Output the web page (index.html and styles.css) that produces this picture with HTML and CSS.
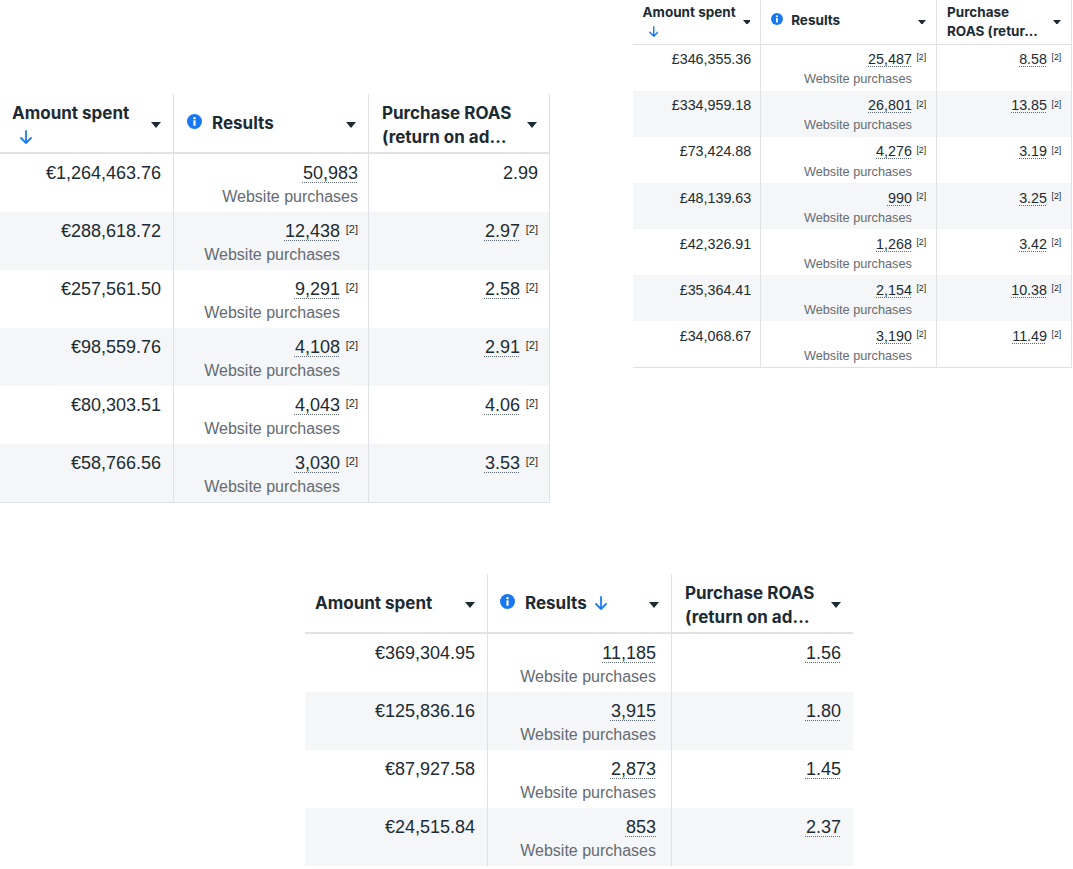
FILE: index.html
```html
<!DOCTYPE html>
<html>
<head>
<meta charset="utf-8">
<link rel="stylesheet" href="styles.css">
</head>
<body>
<div class="canvas">

  <!-- Panel 1 -->
  <div class="panel p1">
    <div class="tbl t1">
      <div class="thead">
        <div class="th c1">
          <div class="label two"><div>Amount spent</div><div class="sortline"><svg class="sort" viewBox="0 0 12 14" width="12" height="14"><path d="M6 1V13M1 8L6 13L11 8" fill="none" stroke="#1a7cf5" stroke-width="1.8" stroke-linecap="round" stroke-linejoin="round"/></svg></div></div>
          <svg class="caret" viewBox="0 0 10 6" width="10" height="6"><path d="M0 0H10L5 6Z" fill="#1c2b33"/></svg>
        </div>
        <div class="th c2">
          <svg class="info" viewBox="0 0 16 16" width="15" height="15"><circle cx="8" cy="8" r="8" fill="#1877f2"/><circle cx="8" cy="4.4" r="1.3" fill="#fff"/><rect x="6.8" y="6.6" width="2.4" height="6" rx="0.6" fill="#fff"/></svg>
          <div class="label">Results</div>
          <svg class="caret" viewBox="0 0 10 6" width="10" height="6"><path d="M0 0H10L5 6Z" fill="#1c2b33"/></svg>
        </div>
        <div class="th c3">
          <div class="label two"><div>Purchase ROAS</div><div>(return on ad…</div></div>
          <svg class="caret" viewBox="0 0 10 6" width="10" height="6"><path d="M0 0H10L5 6Z" fill="#1c2b33"/></svg>
        </div>
      </div>

      <div class="row">
        <div class="td c1"><span class="val">€1,264,463.76</span></div>
        <div class="td c2"><div class="stack"><span class="val u">50,983</span><span class="sub">Website purchases</span></div></div>
        <div class="td c3"><div class="stack"><span class="val">2.99</span></div></div>
      </div>
      <div class="row alt">
        <div class="td c1"><span class="val">€288,618.72</span></div>
        <div class="td c2"><div class="stack"><span class="val u">12,438</span><span class="sub">Website purchases</span></div><span class="ref">[2]</span></div>
        <div class="td c3"><div class="stack"><span class="val u">2.97</span></div><span class="ref">[2]</span></div>
      </div>
      <div class="row">
        <div class="td c1"><span class="val">€257,561.50</span></div>
        <div class="td c2"><div class="stack"><span class="val u">9,291</span><span class="sub">Website purchases</span></div><span class="ref">[2]</span></div>
        <div class="td c3"><div class="stack"><span class="val u">2.58</span></div><span class="ref">[2]</span></div>
      </div>
      <div class="row alt">
        <div class="td c1"><span class="val">€98,559.76</span></div>
        <div class="td c2"><div class="stack"><span class="val u">4,108</span><span class="sub">Website purchases</span></div><span class="ref">[2]</span></div>
        <div class="td c3"><div class="stack"><span class="val u">2.91</span></div><span class="ref">[2]</span></div>
      </div>
      <div class="row">
        <div class="td c1"><span class="val">€80,303.51</span></div>
        <div class="td c2"><div class="stack"><span class="val u">4,043</span><span class="sub">Website purchases</span></div><span class="ref">[2]</span></div>
        <div class="td c3"><div class="stack"><span class="val u">4.06</span></div><span class="ref">[2]</span></div>
      </div>
      <div class="row alt last">
        <div class="td c1"><span class="val">€58,766.56</span></div>
        <div class="td c2"><div class="stack"><span class="val u">3,030</span><span class="sub">Website purchases</span></div><span class="ref">[2]</span></div>
        <div class="td c3"><div class="stack"><span class="val u">3.53</span></div><span class="ref">[2]</span></div>
      </div>
    </div>
  </div>

  <!-- Panel 2 -->
  <div class="panel p2">
    <div class="tbl t2">
      <div class="thead">
        <div class="th c1">
          <div class="label two"><div>Amount spent</div><div class="sortline"><svg class="sort" viewBox="0 0 12 14" width="12" height="14"><path d="M6 1V13M1 8L6 13L11 8" fill="none" stroke="#1a7cf5" stroke-width="1.8" stroke-linecap="round" stroke-linejoin="round"/></svg></div></div>
          <svg class="caret" viewBox="0 0 10 6" width="10" height="6"><path d="M0 0H10L5 6Z" fill="#1c2b33"/></svg>
        </div>
        <div class="th c2">
          <svg class="info" viewBox="0 0 16 16" width="15" height="15"><circle cx="8" cy="8" r="8" fill="#1877f2"/><circle cx="8" cy="4.4" r="1.3" fill="#fff"/><rect x="6.8" y="6.6" width="2.4" height="6" rx="0.6" fill="#fff"/></svg>
          <div class="label">Results</div>
          <svg class="caret" viewBox="0 0 10 6" width="10" height="6"><path d="M0 0H10L5 6Z" fill="#1c2b33"/></svg>
        </div>
        <div class="th c3">
          <div class="label two"><div>Purchase</div><div>ROAS (retur…</div></div>
          <svg class="caret" viewBox="0 0 10 6" width="10" height="6"><path d="M0 0H10L5 6Z" fill="#1c2b33"/></svg>
        </div>
      </div>

      <div class="row">
        <div class="td c1"><span class="val">£346,355.36</span></div>
        <div class="td c2"><div class="stack"><span class="val u">25,487</span><span class="sub">Website purchases</span></div><span class="ref">[2]</span></div>
        <div class="td c3"><div class="stack"><span class="val u">8.58</span></div><span class="ref">[2]</span></div>
      </div>
      <div class="row alt">
        <div class="td c1"><span class="val">£334,959.18</span></div>
        <div class="td c2"><div class="stack"><span class="val u">26,801</span><span class="sub">Website purchases</span></div><span class="ref">[2]</span></div>
        <div class="td c3"><div class="stack"><span class="val u">13.85</span></div><span class="ref">[2]</span></div>
      </div>
      <div class="row">
        <div class="td c1"><span class="val">£73,424.88</span></div>
        <div class="td c2"><div class="stack"><span class="val u">4,276</span><span class="sub">Website purchases</span></div><span class="ref">[2]</span></div>
        <div class="td c3"><div class="stack"><span class="val u">3.19</span></div><span class="ref">[2]</span></div>
      </div>
      <div class="row alt">
        <div class="td c1"><span class="val">£48,139.63</span></div>
        <div class="td c2"><div class="stack"><span class="val u">990</span><span class="sub">Website purchases</span></div><span class="ref">[2]</span></div>
        <div class="td c3"><div class="stack"><span class="val u">3.25</span></div><span class="ref">[2]</span></div>
      </div>
      <div class="row">
        <div class="td c1"><span class="val">£42,326.91</span></div>
        <div class="td c2"><div class="stack"><span class="val u">1,268</span><span class="sub">Website purchases</span></div><span class="ref">[2]</span></div>
        <div class="td c3"><div class="stack"><span class="val u">3.42</span></div><span class="ref">[2]</span></div>
      </div>
      <div class="row alt">
        <div class="td c1"><span class="val">£35,364.41</span></div>
        <div class="td c2"><div class="stack"><span class="val u">2,154</span><span class="sub">Website purchases</span></div><span class="ref">[2]</span></div>
        <div class="td c3"><div class="stack"><span class="val u">10.38</span></div><span class="ref">[2]</span></div>
      </div>
      <div class="row last">
        <div class="td c1"><span class="val">£34,068.67</span></div>
        <div class="td c2"><div class="stack"><span class="val u">3,190</span><span class="sub">Website purchases</span></div><span class="ref">[2]</span></div>
        <div class="td c3"><div class="stack"><span class="val u">11.49</span></div><span class="ref">[2]</span></div>
      </div>
    </div>
  </div>

  <!-- Panel 3 -->
  <div class="panel p3">
    <div class="tbl t3">
      <div class="thead">
        <div class="th c1">
          <div class="label">Amount spent</div>
          <svg class="caret" viewBox="0 0 10 6" width="10" height="6"><path d="M0 0H10L5 6Z" fill="#1c2b33"/></svg>
        </div>
        <div class="th c2">
          <svg class="info" viewBox="0 0 16 16" width="15" height="15"><circle cx="8" cy="8" r="8" fill="#1877f2"/><circle cx="8" cy="4.4" r="1.3" fill="#fff"/><rect x="6.8" y="6.6" width="2.4" height="6" rx="0.6" fill="#fff"/></svg>
          <div class="label inline">Results<svg class="sort inl" viewBox="0 0 12 14" width="12" height="14"><path d="M6 1V13M1 8L6 13L11 8" fill="none" stroke="#1a7cf5" stroke-width="1.8" stroke-linecap="round" stroke-linejoin="round"/></svg></div>
          <svg class="caret" viewBox="0 0 10 6" width="10" height="6"><path d="M0 0H10L5 6Z" fill="#1c2b33"/></svg>
        </div>
        <div class="th c3">
          <div class="label two"><div>Purchase ROAS</div><div>(return on ad…</div></div>
          <svg class="caret" viewBox="0 0 10 6" width="10" height="6"><path d="M0 0H10L5 6Z" fill="#1c2b33"/></svg>
        </div>
      </div>

      <div class="row">
        <div class="td c1"><span class="val">€369,304.95</span></div>
        <div class="td c2"><div class="stack"><span class="val u">11,185</span><span class="sub">Website purchases</span></div></div>
        <div class="td c3"><div class="stack"><span class="val u">1.56</span></div></div>
      </div>
      <div class="row alt">
        <div class="td c1"><span class="val">€125,836.16</span></div>
        <div class="td c2"><div class="stack"><span class="val u">3,915</span><span class="sub">Website purchases</span></div></div>
        <div class="td c3"><div class="stack"><span class="val u">1.80</span></div></div>
      </div>
      <div class="row">
        <div class="td c1"><span class="val">€87,927.58</span></div>
        <div class="td c2"><div class="stack"><span class="val u">2,873</span><span class="sub">Website purchases</span></div></div>
        <div class="td c3"><div class="stack"><span class="val u">1.45</span></div></div>
      </div>
      <div class="row alt">
        <div class="td c1"><span class="val">€24,515.84</span></div>
        <div class="td c2"><div class="stack"><span class="val u">853</span><span class="sub">Website purchases</span></div></div>
        <div class="td c3"><div class="stack"><span class="val u">2.37</span></div></div>
      </div>
    </div>
  </div>

</div>
</body>
</html>
```

FILE: styles.css
```css
html, body {
  margin: 0;
  padding: 0;
  background: #ffffff;
}
body {
  width: 1073px;
  height: 869px;
  overflow: hidden;
  font-family: "Liberation Sans", Arial, sans-serif;
  color: #1c2b33;
}
.canvas {
  position: relative;
  width: 1073px;
  height: 869px;
}
.panel {
  position: absolute;
}
.p1 { left: 0; top: 94px; }
.p2 { left: 633px; top: -3px; }
.p3 { left: 305px; top: 574px; }

.t2 { zoom: 0.795; }

.tbl {
  display: flex;
  flex-direction: column;
}
.thead {
  display: flex;
}
.th {
  box-sizing: border-box;
  height: 60px;
  display: flex;
  align-items: center;
  padding: 0 12px 0 13px;
  border-bottom: 2px solid #dfe1e4;
  border-right: 1px solid #dfe1e4;
  font-family: Inter, "Noto Sans", sans-serif;
  font-weight: 700;
  font-size: 17px;
  line-height: 24px;
  color: #1c2b33;
}
.th.c1 { padding-left: 12px; }
.t3 .th.c1 { padding-left: 10px; }
.t3 .th.c2 { padding-left: 12px; }
.label {
  flex: 1;
  display: flex;
  flex-direction: column;
  white-space: nowrap;
}
.label.two {
  margin-top: 4px;
}
.label.inline {
  flex-direction: row;
  align-items: center;
}
.sortline {
  height: 24px;
  display: flex;
  align-items: center;
  padding-left: 8px;
}
.sort.inl {
  margin-left: 8px;
}
.info {
  flex: none;
  margin-right: 10px;
  margin-top: -3px;
}
.caret {
  flex: none;
  margin-left: 6px;
  margin-top: 4px;
}

.row {
  display: flex;
  background: #ffffff;
}
.row.alt {
  background: #f5f6f7;
}
.t1 .row.last,
.t2 .row.last {
  border-bottom: 1px solid #dfe1e4;
}
.td {
  box-sizing: border-box;
  height: 58px;
  display: flex;
  justify-content: flex-end;
  align-items: flex-start;
  padding: 7px 10px 3px 0;
  border-right: 1px solid #dfe1e4;
}
.stack {
  display: flex;
  flex-direction: column;
  align-items: flex-end;
}
.val {
  font-size: 18px;
  line-height: 24px;
  color: #1c2b33;
  white-space: nowrap;
}
.val.u {
  text-decoration: underline dotted #5d6a73;
  text-decoration-thickness: 1px;
  text-underline-offset: 3px;
}
.sub {
  font-size: 16px;
  line-height: 24px;
  color: #646b73;
  white-space: nowrap;
}
.ref {
  width: 18px;
  text-align: right;
  font-size: 11px;
  line-height: 12px;
  margin-top: 4px;
  color: #1c2b33;
}

/* table 1 widths */
.t1 .c1 { width: 174px; }
.t1 .c2 { width: 195px; }
.t1 .c3 { width: 181px; }
.t1 .td.c1 { padding-right: 12px; }
.t1 .td.c2 { padding-right: 10px; }
.t1 .td.c3 { padding-right: 11px; }

/* table 2 widths (unzoomed units) */
.t2 .c1 { width: 161px; }
.t2 .c2 { width: 221px; }
.t2 .c3 { width: 170px; }
.t2 .td.c1 { padding-right: 11px; }
.t2 .td.c2 { padding-right: 12px; }
.t2 .td.c3 { padding-right: 12px; }
.t2 .th.c3 { padding-left: 13px; }

/* table 3 widths */
.t3 .c1 { width: 183px; }
.t3 .c2 { width: 184px; }
.t3 .c3 { width: 181px; border-right: none; }
.t3 .td.c1 { padding-right: 12px; }
.t3 .td.c2 { padding-right: 15px; }
.t3 .td.c3 { padding-right: 12px; }
```
